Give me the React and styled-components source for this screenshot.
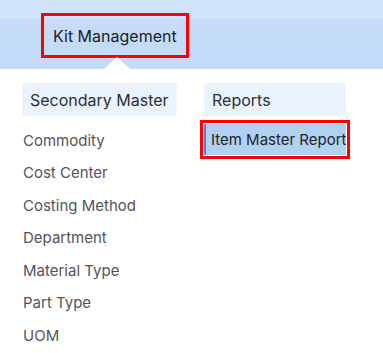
import React from "react";
import styled, { createGlobalStyle } from "styled-components";

const Global = createGlobalStyle`
  html, body { margin: 0; padding: 0; background: #ffffff; }
  body { font-family: Inter, "Noto Sans", "Liberation Sans", sans-serif; }
`;

const Header = styled.header`
  position: relative;
  height: 69px;
  box-sizing: border-box;
  padding: 16px 0 0 44px;
  display: flex;
  align-items: flex-start;
  background: linear-gradient(to bottom, #cfe4fc 0, #cfe4fc 19px, #c5ddf9 19px, #c3dbf8 100%);
`;

const NavItem = styled.div`
  height: 39px;
  padding: 0 9px;
  display: flex;
  align-items: center;
  font-size: 16px;
  color: #1c1c24;
  outline: 3px solid #ff0000;
  white-space: nowrap;
`;

const Caret = styled.span`
  position: absolute;
  left: 104px;
  bottom: 0;
  width: 0;
  height: 0;
  border-left: 13.5px solid transparent;
  border-right: 13.5px solid transparent;
  border-bottom: 12px solid #ffffff;
`;

const Dropdown = styled.div`
  display: flex;
  gap: 27px;
  padding: 14px 0 0 22px;
`;

const Column = styled.section`
  width: ${(p) => p.$w}px;
  display: flex;
  flex-direction: column;
`;

const Chip = styled.div`
  height: 33px;
  box-sizing: border-box;
  padding: 0 8px;
  display: flex;
  align-items: center;
  background: #eaf3fe;
  border-radius: 4px;
  font-size: 16px;
  color: #2f2f33;
`;

const List = styled.ul`
  list-style: none;
  margin: 8px 0 0;
  padding: 0;
`;

const Item = styled.li`
  height: 32.5px;
  display: flex;
  align-items: center;
  font-size: 15px;
  color: #545459;
  padding-left: 1px;
`;

const ActiveItem = styled.li`
  height: 31px;
  box-sizing: border-box;
  display: flex;
  align-items: center;
  background: #b1d1f2;
  border-left: 2px solid #3d86f0;
  padding-left: 5px;
  font-size: 15px;
  color: #232328;
  white-space: nowrap;
  overflow: hidden;
  outline: 3px solid #ff0000;
  outline-offset: 1px;
`;

const masters = [
  "Commodity",
  "Cost Center",
  "Costing Method",
  "Department",
  "Material Type",
  "Part Type",
  "UOM",
];

export default function App() {
  return (
    <>
      <Global />
      <Header>
        <NavItem>Kit Management</NavItem>
        <Caret />
      </Header>
      <Dropdown>
        <Column $w={155}>
          <Chip>Secondary Master</Chip>
          <List>
            {masters.map((m) => (
              <Item key={m}>{m}</Item>
            ))}
          </List>
        </Column>
        <Column $w={142}>
          <Chip>Reports</Chip>
          <List>
            <ActiveItem>Item Master Report</ActiveItem>
          </List>
        </Column>
      </Dropdown>
    </>
  );
}
